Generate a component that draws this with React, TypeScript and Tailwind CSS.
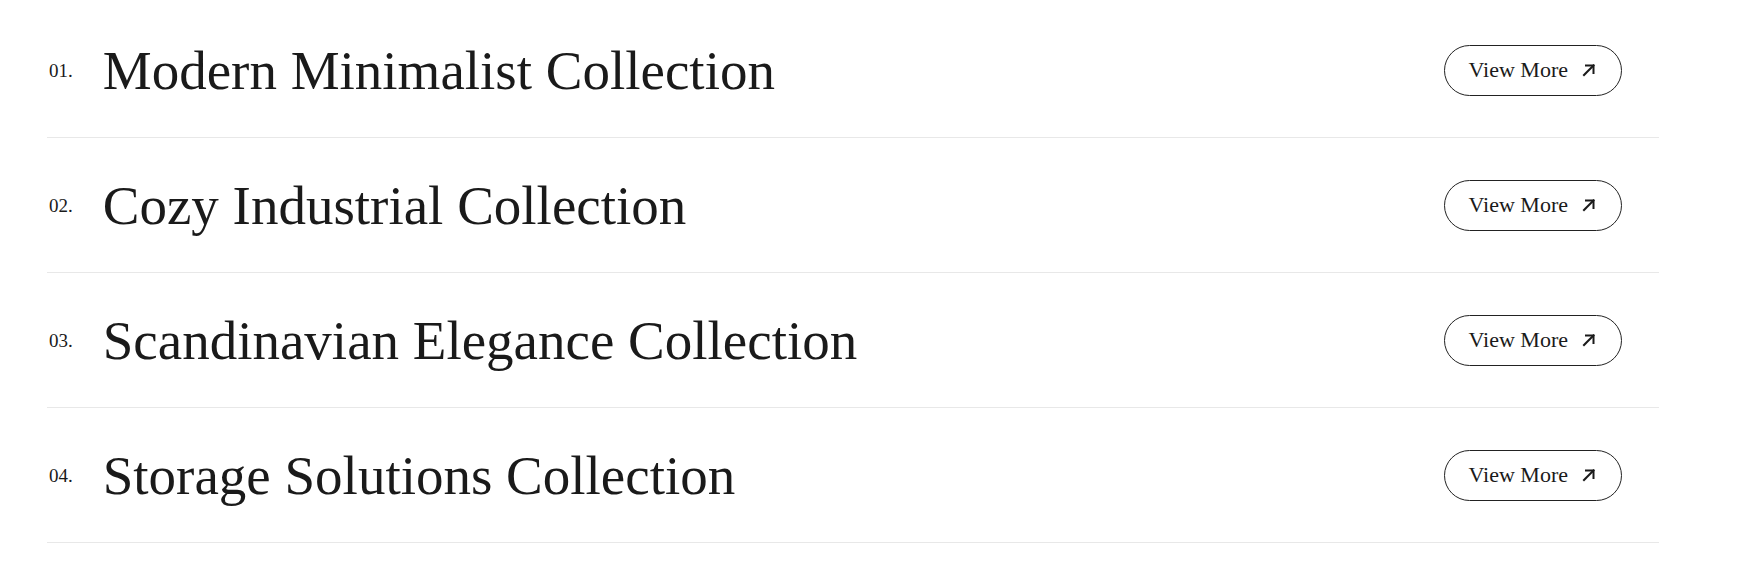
import React from 'react';

interface Collection {
    num: string;
    title: string;
}

const collections: Collection[] = [
    { num: '01.', title: 'Modern Minimalist Collection' },
    { num: '02.', title: 'Cozy Industrial Collection' },
    { num: '03.', title: 'Scandinavian Elegance Collection' },
    { num: '04.', title: 'Storage Solutions Collection' },
];

const Arrow = () => (
    <svg width="14" height="14" viewBox="0 0 14 14" fill="none" stroke="currentColor" strokeWidth="2" strokeLinecap="square">
        <path d="M2 12 L11.5 2.5" />
        <path d="M4 2.5 H11.5 V10" />
    </svg>
);

const CollectionRow = ({ item }: { item: Collection }) => (
    <div className="flex items-center justify-between h-[135px] border-b border-[#e8e8e8] pr-[37px]">
        <div className="flex items-center gap-[30px]">
            <span className="text-[19px] text-[#1a1a1a] leading-none pl-[2px]">{item.num}</span>
            <h2 className="text-[55px] text-[#1a1a1a] leading-none">{item.title}</h2>
        </div>
        <button className="flex items-center gap-[14px] h-[51px] pl-[24px] pr-[25px] rounded-full border border-[#222] text-[22px] text-[#1a1a1a] leading-none">
            View More
            <Arrow />
        </button>
    </div>
);

const App: React.FC = () => {
    return (
        <div className="min-h-screen bg-white pt-[3px] pl-[47px]" style={{ fontFamily: '"Liberation Serif", serif' }}>
            <div className="w-[1612px]">
                {collections.map(c => (
                    <CollectionRow key={c.num} item={c} />
                ))}
            </div>
        </div>
    );
};

export default App;
